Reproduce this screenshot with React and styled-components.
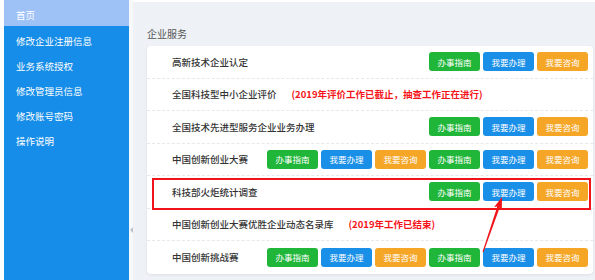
import styled, { createGlobalStyle } from 'styled-components';

const MENU = ['首页', '修改企业注册信息', '业务系统授权', '修改管理员信息', '修改账号密码', '操作说明'];

const SERVICES = [
  { id: 1, name: '高新技术企业认定', sets: 1 },
  { id: 2, name: '全国科技型中小企业评价', note: '(2019年评价工作已截止，抽查工作正在进行)' },
  { id: 3, name: '全国技术先进型服务企业业务办理', sets: 1 },
  { id: 4, name: '中国创新创业大赛', sets: 2 },
  { id: 5, name: '科技部火炬统计调查', sets: 1, marked: true },
  { id: 6, name: '中国创新创业大赛优胜企业动态名录库', note: '(2019年工作已结束)' },
  { id: 7, name: '中国创新挑战赛', sets: 2 },
];

const BUTTONS = [
  { label: '办事指南', tone: '#20b63a' },
  { label: '我要办理', tone: '#1a8fe8' },
  { label: '我要咨询', tone: '#f5a627' },
];

const GlobalStyle = createGlobalStyle`
  html, body {
    margin: 0;
    padding: 0;
    background: #fff;
  }
  body {
    font-family: "Noto Sans CJK SC", "Noto Sans", sans-serif;
  }
`;

const App = () => {
  return (
    <>
      <GlobalStyle />
      <Layout>
        <Sidebar>
          {MENU.map((item, i) => (
            <MenuItem key={item} $active={i === 0}>
              {item}
            </MenuItem>
          ))}
        </Sidebar>
        <Splitter>
          <Handle />
        </Splitter>
        <Main>
          <Title>企业服务</Title>
          <Card>
            {SERVICES.map((s) => (
              <Row key={s.id} $marked={s.marked}>
                <Label>{s.name}</Label>
                {s.note && <Note>{s.note}</Note>}
                {s.sets && (
                  <Actions>
                    {Array.from({ length: s.sets }).flatMap((_, k) =>
                      BUTTONS.map((b) => (
                        <Button key={`${k}-${b.label}`} $tone={b.tone}>
                          {b.label}
                        </Button>
                      ))
                    )}
                  </Actions>
                )}
              </Row>
            ))}
            <Arrow viewBox="0 0 446 228" aria-hidden="true">
              <polygon
                points="336.5,206.2 352.7,161.4 354.8,163.6 355,151 347.2,161 350.3,160.6 335.5,205.8"
                fill="#f0141a"
              />
            </Arrow>
          </Card>
        </Main>
      </Layout>
    </>
  );
};

const Layout = styled.div`
  display: flex;
  height: 280px;
  padding-left: 4px;
  overflow: hidden;
`;

const Sidebar = styled.nav`
  width: 125px;
  flex-shrink: 0;
  background: #168de8;
`;

const MenuItem = styled.div`
  height: ${(p) => (p.$active ? '26px' : '25px')};
  box-sizing: border-box;
  padding: 4px 0 0 12px;
  display: flex;
  align-items: center;
  font-size: 9.5px;
  color: #fff;
  background: ${(p) => (p.$active ? '#9fc2f6' : 'transparent')};
`;

const Splitter = styled.div`
  width: 4px;
  flex-shrink: 0;
  background: #f6f8fa;
  display: flex;
  align-items: flex-start;
  padding-top: 227px;
  box-sizing: border-box;
`;

const Handle = styled.div`
  width: 0;
  height: 0;
  margin-left: 1px;
  border-top: 3px solid transparent;
  border-bottom: 3px solid transparent;
  border-right: 3px solid #bcc2c8;
`;

const Main = styled.main`
  flex: 1;
  background: #eef1f5;
  border-top: 2px solid #fff;
  padding: 0 2px 0 14px;
`;

const Title = styled.div`
  margin-top: 24px;
  line-height: 16px;
  margin-bottom: 4px;
  font-size: 10px;
  color: #555;
`;

const Card = styled.div`
  position: relative;
  background: #fff;
  border-radius: 4px;
  box-shadow: 0 1px 3px rgba(0, 0, 0, 0.08);
`;

const Row = styled.div`
  position: relative;
  height: 32.5px;
  box-sizing: border-box;
  display: flex;
  align-items: center;
  padding: 0 5px 0 25px;
  border-bottom: 1px dashed #e6e8eb;

  &:last-of-type {
    border-bottom: none;
  }

  ${(p) =>
    p.$marked &&
    `
    &::after {
      content: '';
      position: absolute;
      left: 5px;
      right: 2px;
      top: 2px;
      bottom: -2px;
      border: 2px solid #f0141a;
      pointer-events: none;
    }
  `}
`;

const Label = styled.span`
  font-size: 9.5px;
  color: #333;
  font-weight: 500;
  white-space: nowrap;
`;

const Note = styled.span`
  margin-left: 15px;
  font-size: 9.5px;
  font-weight: 700;
  color: #f5141a;
  white-space: nowrap;
`;

const Actions = styled.div`
  margin-left: auto;
  display: flex;
  gap: 3px;
`;

const Button = styled.span`
  width: 51px;
  height: 19px;
  display: flex;
  align-items: center;
  justify-content: center;
  border-radius: 3px;
  background: ${(p) => p.$tone};
  color: #fff;
  font-size: 8.5px;
`;

const Arrow = styled.svg`
  position: absolute;
  left: 0;
  top: 0;
  width: 446px;
  height: 228px;
  pointer-events: none;
`;

export default App;
